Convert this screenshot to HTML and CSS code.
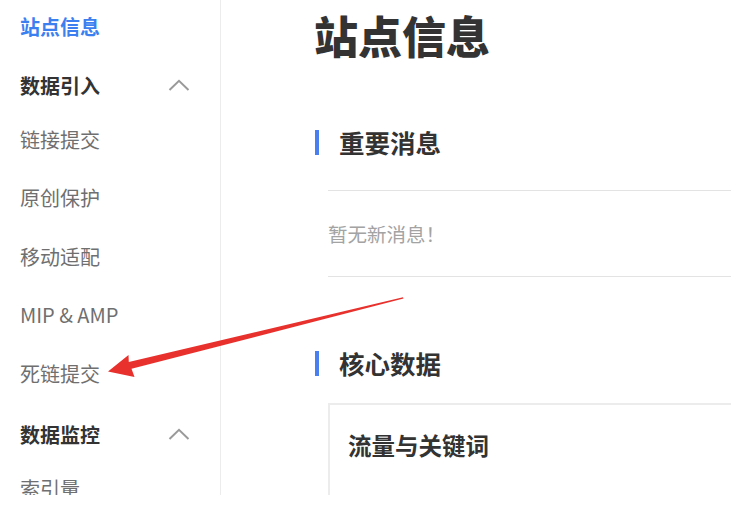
FILE: index.html
```html
<!DOCTYPE html>
<html lang="zh-CN">
<head>
<meta charset="utf-8">
<title>站点信息</title>
<link rel="stylesheet" href="styles.css">
</head>
<body>
<div class="page">
  <aside class="sidebar">
    <div class="nav-top">站点信息</div>
    <div class="nav-group">
      <span>数据引入</span>
      <svg class="chev" width="22" height="12" viewBox="0 0 22 12"><polyline points="1.5,11 11,1.8 20.5,11" fill="none" stroke="#9a9a9a" stroke-width="2"/></svg>
    </div>
    <div class="nav-item">链接提交</div>
    <div class="nav-item">原创保护</div>
    <div class="nav-item">移动适配</div>
    <div class="nav-item">MIP &amp; AMP</div>
    <div class="nav-item">死链提交</div>
    <div class="nav-group">
      <span>数据监控</span>
      <svg class="chev" width="22" height="12" viewBox="0 0 22 12"><polyline points="1.5,11 11,1.8 20.5,11" fill="none" stroke="#9a9a9a" stroke-width="2"/></svg>
    </div>
    <div class="nav-item">索引量</div>
  </aside>
  <main class="main">
    <h1 class="page-title">站点信息</h1>
    <h2 class="sec-title sec-first"><span class="bar"></span>重要消息</h2>
    <div class="msg-box">暂无新消息！</div>
    <h2 class="sec-title sec-core"><span class="bar"></span>核心数据</h2>
    <div class="card">
      <div class="card-title">流量与关键词</div>
    </div>
  </main>
  <svg class="arrow" width="731" height="516" viewBox="0 0 731 516">
    <polygon fill="#e8302c" points="108,371.5 128.5,355 128.8,362 403,297.3 403.5,298.6 131.5,368.8 134.5,377"/>
  </svg>
</div>
</body>
</html>
```

FILE: styles.css
```css
html, body {
  margin: 0;
  padding: 0;
  background: #ffffff;
}
body {
  font-family: "Noto Sans CJK SC", "Noto Sans", sans-serif;
  color: #333333;
}
.page {
  position: relative;
  display: flex;
  height: 495px;
  overflow: hidden;
  width: 731px;
}
.sidebar {
  width: 170px;
  flex: none;
  padding: 0 30px 0 20px;
  border-right: 1px solid #ececec;
  font-size: 20px;
}
.nav-top {
  height: 54px;
  line-height: 54px;
  color: #3b7ff0;
  font-weight: 700;
}
.nav-group {
  display: flex;
  align-items: center;
  justify-content: space-between;
  padding: 22px 0 14.5px;
  height: 20px;
  line-height: 20px;
  font-weight: 700;
  color: #333333;
}
.chev {
  display: block;
  margin-top: -2px;
}
.nav-item {
  height: 58.5px;
  line-height: 58.5px;
  color: #6f6f6f;
}
.main {
  flex: 1;
  padding: 7px 0 0 93px;
  min-width: 0;
}
.page-title {
  margin: 0;
  font-size: 44px;
  line-height: 56px;
  font-weight: 900;
  color: #333333;
}
.sec-title {
  display: flex;
  align-items: center;
  margin: 0;
  font-size: 25.5px;
  line-height: 30px;
  font-weight: 700;
  color: #333333;
}
.sec-first {
  margin-top: 64px;
}
.sec-core {
  margin-top: 71px;
}
.bar {
  display: block;
  width: 4px;
  height: 25px;
  background: #4a7ff0;
  margin: 0 20px 0 1px;
}
.msg-box {
  margin: 33px 0 0 14px;
  border-top: 1px solid #e3e3e3;
  border-bottom: 1px solid #e3e3e3;
  padding: 30px 0 29px;
  font-size: 19.5px;
  line-height: 26px;
  color: #a3a3a3;
}
.card {
  margin: 25px -4px 0 14px;
  border: 2px solid #ececec;
  padding: 25px 0 40px 18px;
}
.card-title {
  font-size: 23.5px;
  line-height: 30px;
  font-weight: 700;
  color: #333333;
}
.arrow {
  position: absolute;
  left: 0;
  top: 0;
  pointer-events: none;
}
```
